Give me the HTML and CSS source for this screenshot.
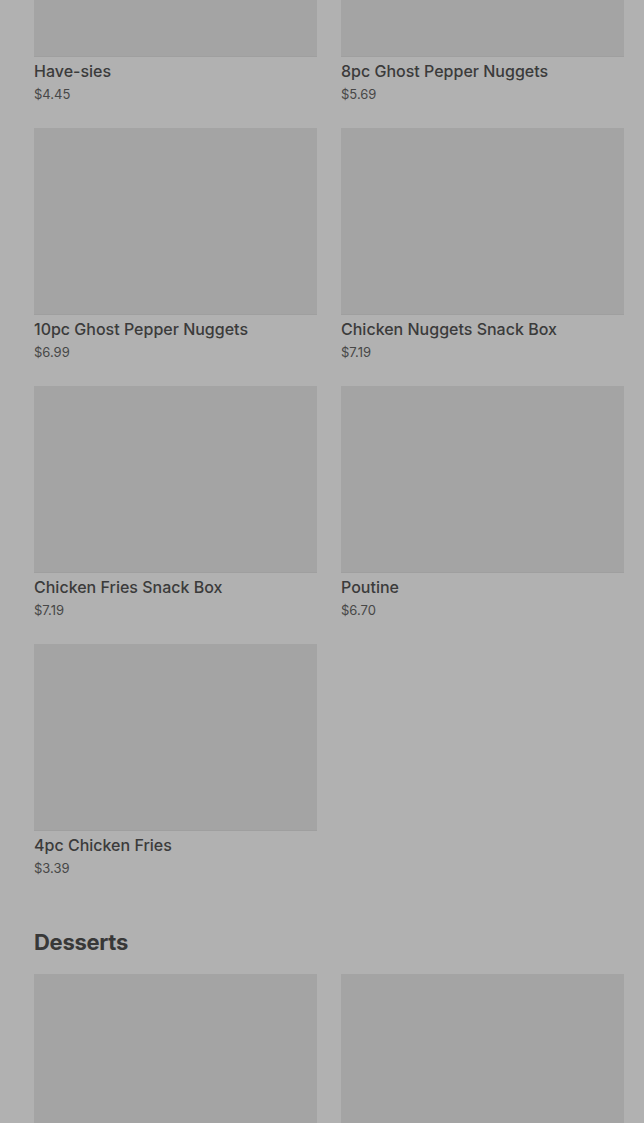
FILE: index.html
```html
<!DOCTYPE html>
<html>
<head>
    <title>Menu</title>
    <link rel="stylesheet" href="styles.css">
</head>
<body>
    <div class="menu">
        <div class="item-grid">
            <div class="item">
                <div class="item-image"></div>
                <div class="item-name">Have-sies</div>
                <div class="item-price">$4.45</div>
            </div>
            <div class="item">
                <div class="item-image"></div>
                <div class="item-name">8pc Ghost Pepper Nuggets</div>
                <div class="item-price">$5.69</div>
            </div>
            <div class="item">
                <div class="item-image"></div>
                <div class="item-name">10pc Ghost Pepper Nuggets</div>
                <div class="item-price">$6.99</div>
            </div>
            <div class="item">
                <div class="item-image"></div>
                <div class="item-name">Chicken Nuggets Snack Box</div>
                <div class="item-price">$7.19</div>
            </div>
            <div class="item">
                <div class="item-image"></div>
                <div class="item-name">Chicken Fries Snack Box</div>
                <div class="item-price">$7.19</div>
            </div>
            <div class="item">
                <div class="item-image"></div>
                <div class="item-name">Poutine</div>
                <div class="item-price">$6.70</div>
            </div>
            <div class="item">
                <div class="item-image"></div>
                <div class="item-name">4pc Chicken Fries</div>
                <div class="item-price">$3.39</div>
            </div>
        </div>

        <h2 class="section-title">Desserts</h2>
        <div class="item-grid">
            <div class="item">
                <div class="item-image"></div>
            </div>
            <div class="item">
                <div class="item-image"></div>
            </div>
        </div>
    </div>
</body>
</html>
```

FILE: styles.css
```css
body {
    margin: 0;
    padding: 0;
    background-color: #b1b1b1;
    font-family: Inter, "Noto Sans", sans-serif;
    color: #3a3a3a;
    overflow: hidden;
}
.menu {
    margin-top: -130px;
    padding: 0 20px 0 34px;
}
.item-grid {
    display: grid;
    grid-template-columns: 283px 283px;
    column-gap: 24px;
    row-gap: 25px;
}
.item-image {
    height: 187px;
    background-color: #a4a4a4;
    border-bottom: 1px solid #9f9f9f;
    box-sizing: border-box;
}
.item-name {
    margin-top: 4px;
    font-size: 16px;
    line-height: 20px;
    font-weight: 500;
    color: #3b3b3b;
}
.item-price {
    margin-top: 4px;
    font-size: 13px;
    line-height: 18px;
    color: #474747;
}
.section-title {
    margin: 51px 0 18px;
    font-size: 22px;
    line-height: 28px;
    font-weight: 700;
    letter-spacing: -0.3px;
    color: #383838;
}
```
